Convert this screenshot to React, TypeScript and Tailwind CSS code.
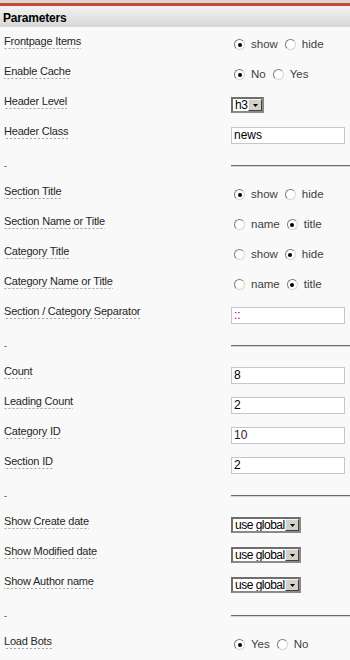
import React from "react";

type Row =
  | { kind: "radio"; label: string; opts: [string, string]; checked: number }
  | { kind: "select"; label: string; value: string; w: number }
  | { kind: "input"; label: string; value: string; color?: string }
  | { kind: "sep" };

const rows: Row[] = [
  { kind: "radio", label: "Frontpage Items", opts: ["show", "hide"], checked: 0 },
  { kind: "radio", label: "Enable Cache", opts: ["No", "Yes"], checked: 0 },
  { kind: "select", label: "Header Level", value: "h3", w: 33 },
  { kind: "input", label: "Header Class", value: "news" },
  { kind: "sep" },
  { kind: "radio", label: "Section Title", opts: ["show", "hide"], checked: 0 },
  { kind: "radio", label: "Section Name or Title", opts: ["name", "title"], checked: 1 },
  { kind: "radio", label: "Category Title", opts: ["show", "hide"], checked: 1 },
  { kind: "radio", label: "Category Name or Title", opts: ["name", "title"], checked: 1 },
  { kind: "input", label: "Section / Category Separator", value: "::", color: "purple" },
  { kind: "sep" },
  { kind: "input", label: "Count", value: "8" },
  { kind: "input", label: "Leading Count", value: "2" },
  { kind: "input", label: "Category ID", value: "10", color: "darkpurple" },
  { kind: "input", label: "Section ID", value: "2" },
  { kind: "sep" },
  { kind: "select", label: "Show Create date", value: "use global", w: 70 },
  { kind: "select", label: "Show Modified date", value: "use global", w: 70 },
  { kind: "select", label: "Show Author name", value: "use global", w: 70 },
  { kind: "sep" },
  { kind: "radio", label: "Load Bots", opts: ["Yes", "No"], checked: 0 },
];

function Radio({ on }: { on: boolean }) {
  return (
    <span className="relative inline-flex items-center justify-center w-[11px] h-[11px] shrink-0 rounded-full bg-white border border-t-[#7c7c7c] border-l-[#7c7c7c] border-r-[#d6d6d6] border-b-[#d6d6d6]">
      {on && <span className="w-[4px] h-[4px] rounded-full bg-black" />}
    </span>
  );
}

function Label({ text }: { text?: string }) {
  if (!text) {
    return (
      <span className="inline-block h-[14px] w-[3px] align-top">
        <span className="block mt-[13px] h-px w-[3px] bg-[#8c8c8c]" />
      </span>
    );
  }
  return (
    <span className="inline-block leading-[13px] pb-px bg-[linear-gradient(to_right,#a0a0a0_50%,transparent_50%)] bg-[length:4px_1px] bg-repeat-x bg-bottom">
      {text}
    </span>
  );
}

function Select({ value, w }: { value: string; w: number }) {
  return (
    <div
      className="flex h-[16px] bg-white border-2 border-t-[#6e6e6e] border-l-[#6e6e6e] border-r-[#8a8a8a] border-b-[#8a8a8a] overflow-hidden"
      style={{ width: w }}
    >
      <div className="flex-1 overflow-hidden whitespace-nowrap pl-[2px] text-[12px] leading-[12px] tracking-[-0.5px] text-black">
        {value}
      </div>
      <div className="w-[14px] h-[12px] shrink-0 bg-[#d4d0c8] border border-t-[#f4f4f4] border-l-[#f4f4f4] border-r-[#404040] border-b-[#404040] flex items-center justify-center">
        <svg width="5" height="3" viewBox="0 0 5 3">
          <path d="M0 0H5L2.5 3Z" fill="#000" />
        </svg>
      </div>
    </div>
  );
}

function Input({ value, color }: { value: string; color?: string }) {
  const c =
    color === "purple"
      ? "text-[#8a008a]"
      : color === "darkpurple"
      ? "text-[#3a1040]"
      : "text-black";
  return (
    <div
      className={
        "w-[114px] h-[17px] bg-white border border-[#c6c6c6] pl-[2px] text-[12px] leading-[15px] whitespace-nowrap " +
        c
      }
    >
      {value}
    </div>
  );
}

export default function App() {
  return (
    <div
      className="w-[350px] min-h-[660px] bg-[#f9f9f9] text-[11px]"
      style={{ fontFamily: '"Liberation Sans", Arial, sans-serif' }}
    >
      <div className="h-[3px] bg-[#d8d8d8]" />
      <div className="h-[3px] bg-[#c54a32]" />
      <div className="h-[21px] bg-[linear-gradient(to_bottom,#f3f3f3,#d6d6d6)] pl-[3px] pt-[5px] text-[12px] leading-[15px] font-bold tracking-[-0.2px] text-black">
        Parameters
      </div>
      {rows.map((r, i) => (
        <div key={i} className="flex h-[30px]">
          <div className="w-[231px] shrink-0 pl-[4px] pt-[6px] tracking-[-0.2px] text-[#262626]">
            <Label text={r.kind === "sep" ? undefined : r.label} />
          </div>
          <div className="flex-1 min-w-0">
            {r.kind === "radio" && (
              <div className="flex items-center pt-[11px] text-[11.5px] leading-[13px] text-[#3e3e3e]">
                <span className="ml-[3px] flex">
                  <Radio on={r.checked === 0} />
                </span>
                <span className="ml-[6px]">{r.opts[0]}</span>
                <span className="ml-[7px] flex">
                  <Radio on={r.checked === 1} />
                </span>
                <span className="ml-[6px]">{r.opts[1]}</span>
              </div>
            )}
            {r.kind === "select" && (
              <div className="pt-[10px]">
                <Select value={r.value} w={r.w} />
              </div>
            )}
            {r.kind === "input" && (
              <div className="pt-[10px]">
                <Input value={r.value} color={r.color} />
              </div>
            )}
            {r.kind === "sep" && (
              <div className="pt-[18px]">
                <div className="h-[2px] border-t border-t-[#6c6c6c] border-b border-b-[#d4d4d4]" />
              </div>
            )}
          </div>
        </div>
      ))}
    </div>
  );
}
